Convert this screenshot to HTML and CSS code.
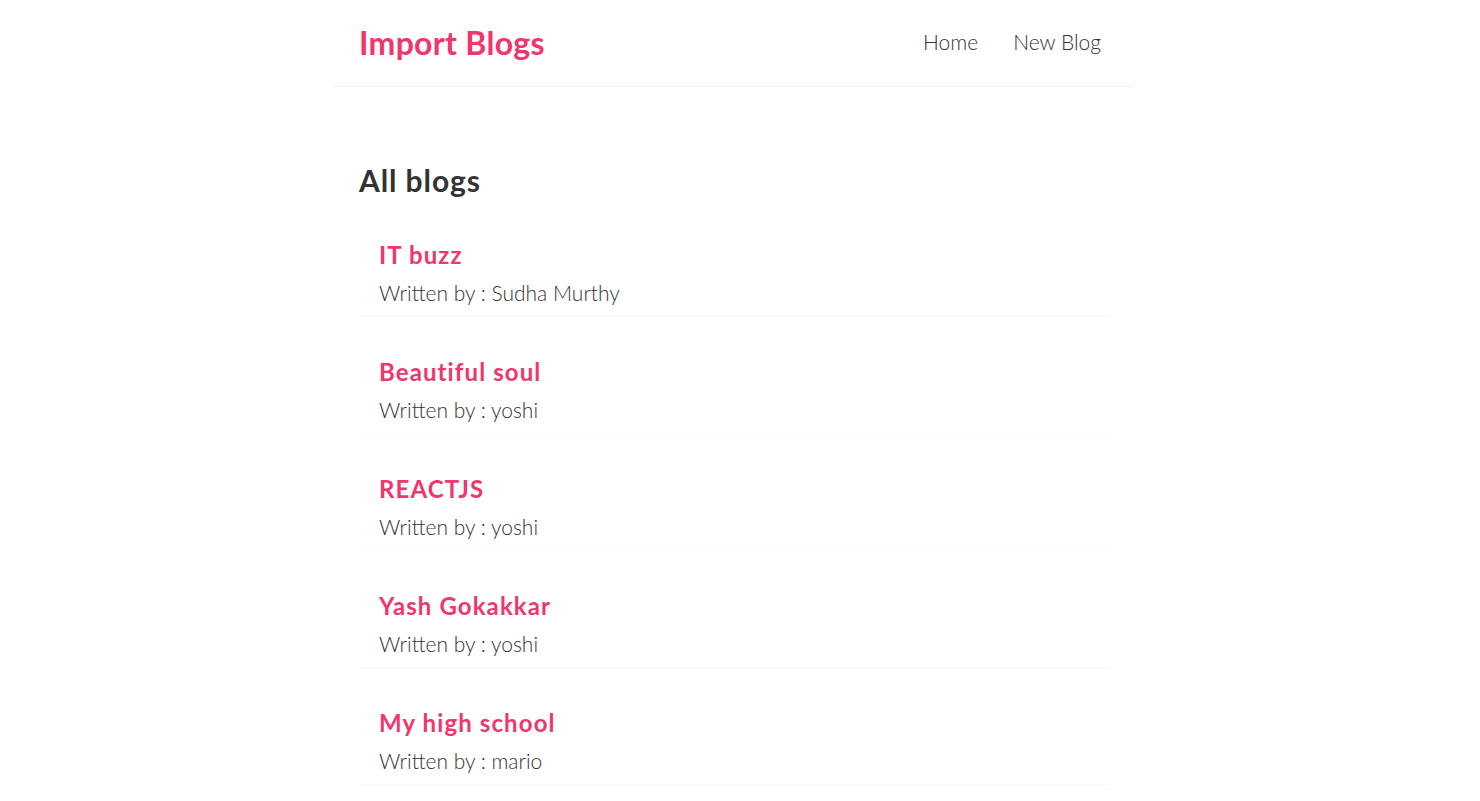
FILE: index.html
```html
<!DOCTYPE html>
<html lang="en">
<head>
<meta charset="utf-8">
<title>Import Blogs</title>
<link rel="stylesheet" href="styles.css">
</head>
<body>
<div class="app">
  <nav class="navbar">
    <h1>Import Blogs</h1>
    <div class="links">
      <a href="#">Home</a>
      <a href="#">New Blog</a>
    </div>
  </nav>
  <main class="content">
    <h2 class="page-title">All blogs</h2>
    <div class="blog-list">
      <div class="blog-preview">
        <h3>IT buzz</h3>
        <p>Written by : Sudha Murthy</p>
      </div>
      <div class="blog-preview">
        <h3>Beautiful soul</h3>
        <p>Written by : yoshi</p>
      </div>
      <div class="blog-preview">
        <h3>REACTJS</h3>
        <p>Written by : yoshi</p>
      </div>
      <div class="blog-preview">
        <h3>Yash Gokakkar</h3>
        <p>Written by : yoshi</p>
      </div>
      <div class="blog-preview">
        <h3>My high school</h3>
        <p>Written by : mario</p>
      </div>
    </div>
  </main>
</div>
</body>
</html>
```

FILE: styles.css
```css
* {
  margin: 0;
  box-sizing: border-box;
  font-family: "Lato", "Noto Sans", sans-serif;
  color: #333;
}

body {
  margin: 0;
  padding-right: 12px;
  background: #fff;
}

.navbar {
  max-width: 800px;
  margin: 0 auto;
  padding: 22px 25px;
  display: flex;
  align-items: center;
  border-bottom: 1px solid #f2f2f2;
}

.navbar h1 {
  font-size: 32px;
  line-height: 42px;
  font-weight: 700;
  letter-spacing: 0.3px;
  color: #f1356d;
}

.links {
  margin-left: auto;
  margin-right: 2px;
  display: flex;
  gap: 23px;
}

.links a {
  text-decoration: none;
  font-size: 21px;
  font-weight: 300;
  padding: 4px 6px 8px;
}

.content {
  max-width: 800px;
  margin: 0 auto;
  padding: 75px 25px 40px;
}

.page-title {
  font-size: 30px;
  line-height: 36px;
  font-weight: 700;
  letter-spacing: 0.9px;
}

.blog-list {
  display: flex;
  flex-direction: column;
  gap: 30px;
  margin-top: 32px;
}

.blog-preview {
  padding: 10px 20px;
  border-bottom: 1px solid #fafafa;
}

.blog-preview h3 {
  font-size: 24px;
  line-height: 30px;
  font-weight: 700;
  letter-spacing: 1.1px;
  color: #f1356d;
  margin-bottom: 10px;
}

.blog-preview p {
  font-size: 21px;
  line-height: 26px;
  font-weight: 300;
}
```
